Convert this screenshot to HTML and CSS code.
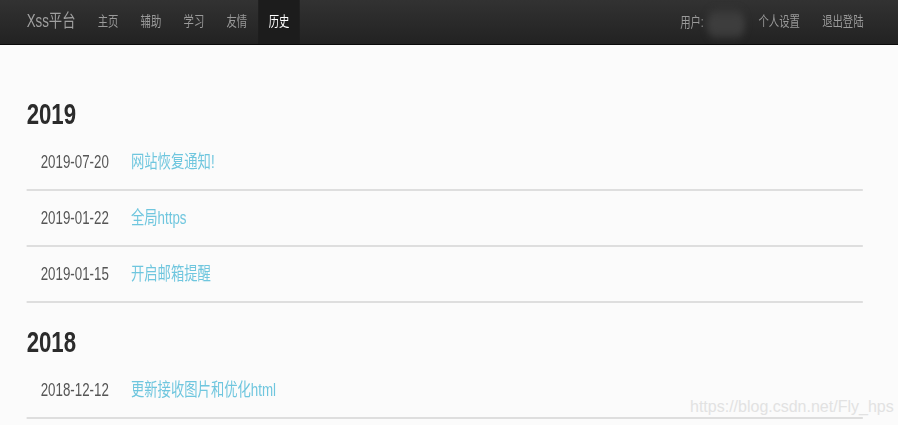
FILE: index.html
```html
<!DOCTYPE html>
<html lang="zh-CN">
<head>
<meta charset="utf-8">
<title>Xss平台 - 历史</title>
<link rel="stylesheet" href="styles.css">
</head>
<body>
<div class="frame">
<div class="page">
  <header class="navbar">
    <a class="brand" href="#">Xss平台</a>
    <ul class="nav">
      <li><a href="#">主页</a></li>
      <li><a href="#">辅助</a></li>
      <li><a href="#">学习</a></li>
      <li><a href="#">友情</a></li>
      <li class="active"><a href="#">历史</a></li>
    </ul>
    <div class="nav-right">
      <p class="navbar-text">用户:<span class="user-blur"></span></p>
      <ul class="nav">
        <li><a href="#">个人设置</a></li>
        <li><a href="#">退出登陆</a></li>
      </ul>
    </div>
  </header>

  <main class="content">
    <section class="year">
      <h2 class="year-title">2019</h2>
      <ul class="history">
        <li class="entry"><span class="date">2019-07-20</span><a class="title" href="#">网站恢复通知!</a></li>
        <li class="entry"><span class="date">2019-01-22</span><a class="title" href="#">全局https</a></li>
        <li class="entry"><span class="date">2019-01-15</span><a class="title" href="#">开启邮箱提醒</a></li>
      </ul>
    </section>
    <section class="year">
      <h2 class="year-title">2018</h2>
      <ul class="history">
        <li class="entry"><span class="date">2018-12-12</span><a class="title" href="#">更新接收图片和优化html</a></li>
      </ul>
    </section>
  </main>
</div>
</div>
<div class="watermark">https://blog.csdn.net/Fly_hps</div>
</body>
</html>
```

FILE: styles.css
```css
html {
  background: #ffffff;
  overflow: hidden;
}

body {
  margin: 0;
  font-family: "Liberation Sans", "Noto Sans CJK SC", sans-serif;
  color: #333;
}

.frame {
  width: 898px;
  height: 425px;
  overflow: hidden;
}

.page {
  width: 1214px;
  height: 425px;
  background: #fbfbfb;
  transform: scaleX(0.74);
  transform-origin: 0 0;
}

/* ---------- navbar ---------- */
.navbar {
  display: flex;
  align-items: stretch;
  height: 44px;
  padding: 0 32px 0 21px;
  background: linear-gradient(#323232, #222222);
  border-bottom: 1px solid #0b0b0b;
}

.brand {
  display: flex;
  align-items: center;
  padding: 0 15px 3px;
  font-size: 18px;
  line-height: 44px;
  color: #a0a0a0;
  text-decoration: none;
}

.nav {
  display: flex;
  margin: 0;
  padding: 0;
  list-style: none;
}

.nav li a {
  display: block;
  padding: 0 15px;
  font-size: 14px;
  line-height: 42px;
  color: #9a9a9a;
  text-decoration: none;
}

.nav li.active a {
  height: 44px;
  padding: 0 14px;
  background: #1c1c1c;
  color: #ffffff;
}

.nav-right {
  display: flex;
  margin-left: auto;
}

.navbar-text {
  display: flex;
  align-items: center;
  margin: 0 3px 0 0;
  font-size: 14px;
  line-height: 42px;
  color: #9a9a9a;
}

.user-blur {
  display: inline-block;
  width: 52px;
  height: 26px;
  margin-left: 4px;
  margin-top: 4px;
  border-radius: 12px;
  background: #3d3d3d;
  filter: blur(4px);
}

/* ---------- content ---------- */
.content {
  padding: 51px 48px 0 36px;
}

.year + .year {
  margin-top: 21px;
}

.year-title {
  margin: 0;
  font-size: 30px;
  line-height: 36px;
  font-weight: bold;
  color: #2b2b2b;
}

.history {
  margin: 3px 0 0;
  padding: 0;
  list-style: none;
}

.entry {
  display: flex;
  padding: 15px 0 15px 19px;
  font-size: 18px;
  line-height: 24px;
  border-bottom: 2px solid #dedede;
}

.date {
  width: 122px;
  color: #555;
}

.title {
  color: #6fc6de;
  text-decoration: none;
}

/* ---------- watermark overlay ---------- */
.watermark {
  position: absolute;
  left: 690px;
  top: 398px;
  font-family: "Liberation Sans", sans-serif;
  font-size: 16px;
  line-height: 18px;
  color: #e2e2e2;
}
```
